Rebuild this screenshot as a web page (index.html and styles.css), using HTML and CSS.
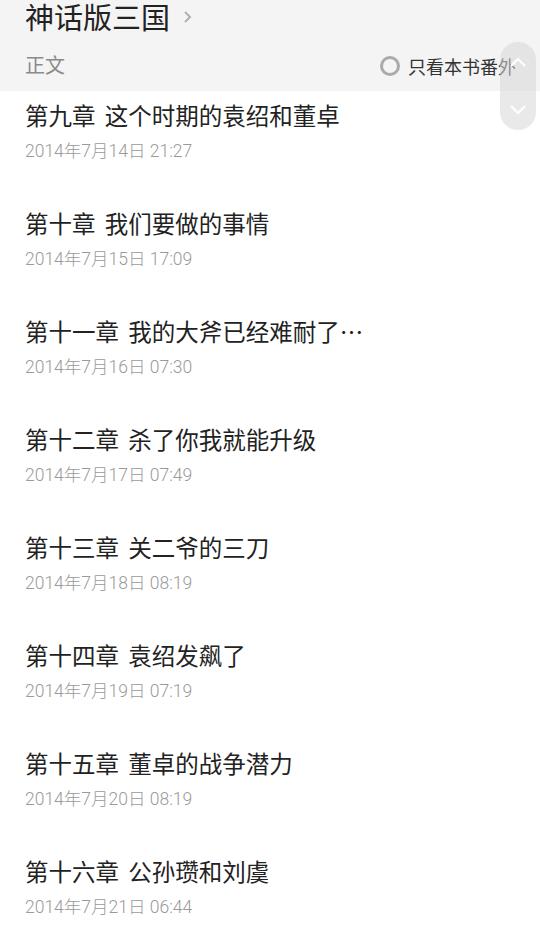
FILE: index.html
```html
<!DOCTYPE html>
<html>
<head>
  <title>神话版三国 目录</title>
  <link rel="stylesheet" href="styles.css">
</head>
<body>
  <div class="header">
    <div class="book-title">
      <span>神话版三国</span>
      <svg class="arrow" width="10" height="14" viewBox="0 0 10 14">
        <path d="M2 2 L7 7 L2 12" fill="none" stroke="#b0b0b0" stroke-width="2"/>
      </svg>
    </div>
    <div class="sub-row">
      <span class="section">正文</span>
      <label class="only-extra">
        <span class="radio"></span>
        <span>只看本书番外</span>
      </label>
    </div>
  </div>

  <ul class="chapters">
    <li><div class="chapter-title">第九章 这个时期的袁绍和董卓</div><div class="chapter-date">2014年7月14日 21:27</div></li>
    <li><div class="chapter-title">第十章 我们要做的事情</div><div class="chapter-date">2014年7月15日 17:09</div></li>
    <li><div class="chapter-title">第十一章 我的大斧已经难耐了…</div><div class="chapter-date">2014年7月16日 07:30</div></li>
    <li><div class="chapter-title">第十二章 杀了你我就能升级</div><div class="chapter-date">2014年7月17日 07:49</div></li>
    <li><div class="chapter-title">第十三章 关二爷的三刀</div><div class="chapter-date">2014年7月18日 08:19</div></li>
    <li><div class="chapter-title">第十四章 袁绍发飙了</div><div class="chapter-date">2014年7月19日 07:19</div></li>
    <li><div class="chapter-title">第十五章 董卓的战争潜力</div><div class="chapter-date">2014年7月20日 08:19</div></li>
    <li><div class="chapter-title">第十六章 公孙瓒和刘虞</div><div class="chapter-date">2014年7月21日 06:44</div></li>
  </ul>

  <div class="scroller">
    <svg width="20" height="12" viewBox="0 0 20 12"><path d="M3 10 L10 3 L17 10" fill="none" stroke="#fff" stroke-width="2.2"/></svg>
    <svg width="20" height="12" viewBox="0 0 20 12"><path d="M3 2 L10 9 L17 2" fill="none" stroke="#fff" stroke-width="2.2"/></svg>
  </div>
</body>
</html>
```

FILE: styles.css
```css
body {
  margin: 0;
  background: #fff;
  font-family: "Noto Sans CJK SC", "Noto Sans", sans-serif;
  overflow: hidden;
}
.header {
  background: #f4f4f4;
  height: 91px;
  padding: 0 24px 0 25px;
}
.book-title {
  display: flex;
  align-items: center;
  gap: 13px;
  height: 32px;
  font-size: 29px;
  line-height: 32px;
  color: #222;
  padding-top: 0;
}
.arrow {
  margin-top: 2px;
}
.sub-row {
  display: flex;
  justify-content: space-between;
  align-items: center;
  margin-top: 18px;
  height: 28px;
}
.section {
  font-size: 20px;
  color: #8a8a8a;
}
.only-extra {
  display: flex;
  align-items: center;
  gap: 8px;
  font-size: 18px;
  color: #333;
  margin-top: 4px;
}
.radio {
  width: 14px;
  height: 14px;
  border: 3px solid #aaa;
  border-radius: 50%;
}
.chapters {
  list-style: none;
  margin: 0;
  padding: 0 25px;
}
.chapters li {
  padding: 9px 0 37px;
}
.chapter-title {
  font-size: 23.5px;
  line-height: 30px;
  word-spacing: 4px;
  color: #222;
}
.chapter-date {
  margin-top: 10px;
  font-family: "Roboto", "Noto Sans CJK SC", sans-serif;
  font-weight: 300;
  font-size: 17.5px;
  line-height: 22px;
  color: #9a9a9a;
}
.scroller {
  position: fixed;
  top: 42px;
  right: 4px;
  width: 36px;
  height: 88px;
  border-radius: 18px;
  background: rgba(215, 215, 215, 0.55);
  display: flex;
  flex-direction: column;
  justify-content: space-between;
  align-items: center;
  padding: 14px 0;
  box-sizing: border-box;
}
```
